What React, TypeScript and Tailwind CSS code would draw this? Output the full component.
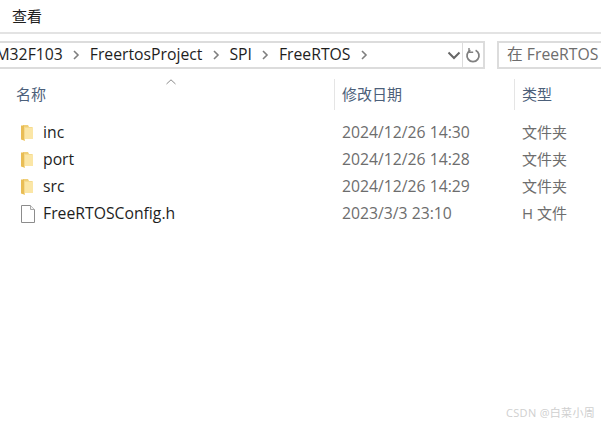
import React from 'react';

const font = 'font-["Open_Sans","Noto_Sans_CJK_SC",sans-serif]';

const Crumb: React.FC = () => (
  <svg width="8" height="10" viewBox="0 0 8 10" className="shrink-0 text-[#7f7f7f]">
    <path d="M2 1l4 4-4 4" fill="none" stroke="currentColor" strokeWidth="1.6" />
  </svg>
);

const FolderIcon: React.FC = () => (
  <svg width="16" height="18" viewBox="0 0 16 18" className="shrink-0">
    <path d="M3 1h5l1 2h3.5v12H3z" fill="#f0cf78" />
    <path d="M1 1.5h3v15l-3-1z" fill="#e9bd55" />
    <path d="M4 3.5h9v11.5H4z" fill="#fbe6a6" />
    <path d="M4 3h1v14H4z" fill="#f5d98d" />
  </svg>
);

const FileIcon: React.FC = () => (
  <svg width="16" height="18" viewBox="0 0 16 18" className="shrink-0">
    <path d="M1.5.5h9l4 4v13h-13z" fill="#fff" stroke="#8c8c8c" />
    <path d="M10.5.5v4h4" fill="#f2f2f2" stroke="#a8a8a8" />
  </svg>
);

interface RowProps {
  name: string;
  date: string;
  kind: string;
  file?: boolean;
}

const Row: React.FC<RowProps> = ({ name, date, kind, file }) => (
  <div className="flex h-[27px] items-center text-[15.75px] text-[#6d6d6d]">
    <div className="flex w-[342px] items-center pl-[20px]">
      <div className="w-[23px]">{file ? <FileIcon /> : <FolderIcon />}</div>
      <span className="text-[#1e1e1e]">{name}</span>
    </div>
    <div className="w-[180px]">{date}</div>
    <div className="text-[15px]">{kind}</div>
  </div>
);

const rows: RowProps[] = [
  { name: 'inc', date: '2024/12/26 14:30', kind: '文件夹' },
  { name: 'port', date: '2024/12/26 14:28', kind: '文件夹' },
  { name: 'src', date: '2024/12/26 14:29', kind: '文件夹' },
  { name: 'FreeRTOSConfig.h', date: '2023/3/3 23:10', kind: 'H 文件', file: true },
];

export default function App() {
  return (
    <div className={`relative h-[424px] w-[601px] overflow-hidden bg-white ${font}`}>
      {/* Ribbon */}
      <div className="flex h-[34px] items-center border-b-2 border-[#e3e3e3] pl-[12px] text-[15px] text-[#1e1e1e]">
        查看
      </div>

      {/* Address and search */}
      <div className="mt-[7px] flex h-[28px] text-[15.75px]">
        <div className="flex w-[485px] shrink-0 justify-end overflow-hidden border-y-2 border-r-2 border-[#dcdcdc]">
          <div className="flex shrink-0 items-center gap-[9.5px] whitespace-nowrap text-[#1e1e1e]">
            <span>STM32F103</span>
            <Crumb />
            <span>FreertosProject</span>
            <Crumb />
            <span>SPI</span>
            <Crumb />
            <span>FreeRTOS</span>
            <Crumb />
          </div>
          <div className="flex w-[94px] shrink-0 items-center justify-end pr-[1px]">
            <svg width="14" height="9" viewBox="0 0 14 9" className="text-[#666666]">
              <path d="M1.5 1.5L7 7l5.5-5.500" fill="none" stroke="currentColor" strokeWidth="2" />
            </svg>
          </div>
          <div className="flex w-[21px] shrink-0 items-center justify-center border-l border-[#dcdcdc]">
            <svg width="16" height="16" viewBox="0 0 16 16" className="text-[#808080]">
              <path d="M10.6 3.2a6 6 0 1 1-5.2 0" fill="none" stroke="currentColor" strokeWidth="1.8" />
              <path d="M4 1v4.2h4.200" fill="none" stroke="currentColor" strokeWidth="1.4" />
            </svg>
          </div>
        </div>
        <div className="ml-[12px] flex flex-1 items-center whitespace-nowrap border-y-2 border-l-2 border-[#dcdcdc] pl-[8px] text-[#6d6d6d]">
          在 FreeRTOS
        </div>
      </div>

      {/* Column headers */}
      <div className="relative mt-[10px] flex h-[31px] items-center text-[15px] text-[#4c607a]">
        <div className="w-[334px] pl-[16px]">名称</div>
        <div className="h-full w-[180px] border-l border-[#e5e5e5] pl-[7px] leading-[31px]">修改日期</div>
        <div className="h-full border-l border-[#e5e5e5] pl-[7px] leading-[31px]">类型</div>
        <svg width="10" height="6" viewBox="0 0 10 6" className="absolute left-[166px] top-0 text-[#8a8a8a]">
          <path d="M.5 5L5 .8 9.500 5" fill="none" stroke="currentColor" />
        </svg>
      </div>

      {/* File list */}
      <div className="mt-[9px]">
        {rows.map((row) => (
          <Row key={row.name} {...row} />
        ))}
      </div>

      {/* Watermark */}
      <div className="absolute bottom-[3px] right-[6px] text-[11px] tracking-[0.3px] text-[#cfcfcf]">CSDN @白菜小周</div>
    </div>
  );
}
